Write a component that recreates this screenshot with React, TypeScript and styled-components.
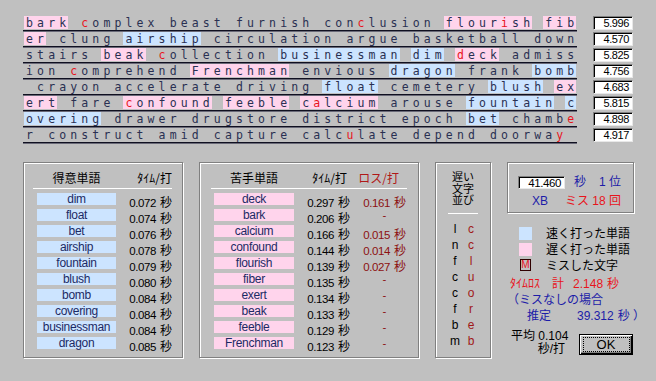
import React from 'react'
import styled, { createGlobalStyle } from 'styled-components'

const PINK = '#ffd4ec'
const BLUE = '#cce4ff'
const GRAY = '#c0c0c0'
const NAVY = '#1c1ca8'
const RED = '#e8141c'
const DARK_RED = '#8c1010'

const CJK = `"Noto Sans CJK JP", sans-serif`
const UI = `"Liberation Sans", "Noto Sans CJK JP", sans-serif`

const GlobalStyle = createGlobalStyle`
  body {
    margin: 0;
    background: ${GRAY};
  }
`

type Kind = 'fast' | 'slow' | undefined

interface Cell {
  ch: string
  kind: Kind
  miss: boolean
}

// [b:..] fast word, [p:..] slow word, ^ marks the next letter as a miss
const LINES = [
  '[p:bark] ^complex beast furnish con^clusion [p:flour^ish] [p:fib]',
  '[p:er] clung [b:airship] circulation argue basketball down',
  'stairs [p:beak] ^collection [b:businessman] [b:dim] [p:^deck] admiss',
  'ion ^comprehend [p:Frenchman] envious [b:dragon] frank [b:bomb]',
  ' crayon accelerate driving [b:float] cemetery [b:blush] [p:ex]',
  '[p:ert] fare [p:^confound] [p:feeble] [p:c^alcium] arouse [b:fountain] [b:c]',
  '[b:overing] drawer drugstore district epoch [b:bet] chamb^e',
  'r construct amid capture calc^ulate depend doorwa^y',
]

const LINE_TIMES = ['5.996', '4.570', '5.825', '4.756', '4.683', '5.815', '4.898', '4.917']

const GOOD = [
  ['dim', '0.072'],
  ['float', '0.074'],
  ['bet', '0.076'],
  ['airship', '0.078'],
  ['fountain', '0.079'],
  ['blush', '0.080'],
  ['bomb', '0.084'],
  ['covering', '0.084'],
  ['businessman', '0.084'],
  ['dragon', '0.085'],
]

const BAD = [
  ['deck', '0.297', '0.161'],
  ['bark', '0.206', ''],
  ['calcium', '0.166', '0.015'],
  ['confound', '0.144', '0.014'],
  ['flourish', '0.139', '0.027'],
  ['fiber', '0.135', ''],
  ['exert', '0.134', ''],
  ['beak', '0.133', ''],
  ['feeble', '0.129', ''],
  ['Frenchman', '0.123', ''],
]

const SLOW_CHARS = [
  ['l', 'c'],
  ['n', 'c'],
  ['f', 'l'],
  ['c', 'u'],
  ['c', 'o'],
  ['f', 'r'],
  ['b', 'e'],
  ['m', 'b'],
]

const parseLine = (src: string): Cell[] => {
  const cells: Cell[] = []
  let kind: Kind
  let miss = false
  for (let i = 0; i < src.length; i++) {
    const c = src[i]
    if (c === '[') {
      kind = src[i + 1] === 'b' ? 'fast' : 'slow'
      i += 2
      continue
    }
    if (c === ']') {
      kind = undefined
      continue
    }
    if (c === '^') {
      miss = true
      continue
    }
    cells.push({ ch: c, kind, miss })
    miss = false
  }
  while (cells.length < 50) cells.push({ ch: ' ', kind: undefined, miss: false })
  return cells
}

const Window = styled.div`
  width: 656px;
  height: 381px;
  box-sizing: border-box;
  padding: 15px 0 0 23px;
  background: ${GRAY};
  overflow: hidden;
`

const TopRow = styled.div`
  display: flex;
  align-items: flex-start;
`

const TypedText = styled.div`
  width: 554px;
`

const Line = styled.div`
  display: flex;
  height: 16px;
  box-sizing: border-box;
  padding: 1px 0 0 1px;
  border-bottom: 1px solid #101020;
  box-shadow: 0 1px 0 #6a6a78;
`

const Ch = styled.span<{ $kind: Kind; $miss: boolean }>`
  flex: none;
  width: 11.06px;
  height: 13px;
  line-height: 15px;
  text-align: center;
  white-space: pre;
  font: 11.5px "DejaVu Sans Mono", monospace;
  color: ${p => (p.$miss ? RED : '#2a3052')};
  background: ${p => (p.$kind === 'fast' ? BLUE : p.$kind === 'slow' ? PINK : 'transparent')};
`

const TimeColumn = styled.div`
  margin-left: 16px;
  padding-top: 1px;
  display: flex;
  flex-direction: column;
  gap: 2px;
`

const SunkenValue = styled.div<{ $w: number }>`
  width: ${p => p.$w}px;
  height: 14px;
  box-sizing: border-box;
  padding-right: 3px;
  background: #fff;
  border: 1px solid;
  border-color: #808080 #e8e8e8 #e8e8e8 #808080;
  box-shadow: inset 1px 1px 0 #000;
  text-align: right;
  font: 11px/12px "Liberation Sans", sans-serif;
  letter-spacing: -0.4px;
  color: #000;
`

const BottomRow = styled.div`
  margin-top: 19px;
  display: flex;
  align-items: flex-start;
  gap: 16px;
`

const Panel = styled.div<{ $w: number; $h: number }>`
  width: ${p => p.$w}px;
  height: ${p => p.$h}px;
  box-sizing: border-box;
  border: 1px solid #808080;
  box-shadow: inset 1px 1px 0 #fff, 1px 1px 0 #fff;
  padding: 7px 0 0 ${p => (p.$w > 100 ? 9 : 0)}px;
`

const WidePanel = styled(Panel)<{ $pad: number }>`
  padding-left: ${p => p.$pad}px;
`

const Table = styled.div<{ $w: number }>`
  width: ${p => p.$w}px;
`

const TableRow = styled.div<{ $cols: string; $pl?: number }>`
  display: grid;
  grid-template-columns: ${p => p.$cols};
  align-items: center;
  padding-left: ${p => p.$pl ?? 4}px;
`

const HeadCell = styled.div<{ $align?: string; $red?: boolean; $pr?: number }>`
  height: 16px;
  font: 12px/16px ${CJK};
  color: ${p => (p.$red ? '#b01818' : '#000')};
  text-align: ${p => p.$align || 'center'};
  padding-right: ${p => p.$pr || 0}px;
`

const Rule = styled.div<{ $w?: number; $mt?: number; $mb?: number }>`
  height: 1px;
  width: ${p => (p.$w ? `${p.$w}px` : 'auto')};
  background: #fff;
  margin: ${p => p.$mt ?? 2}px auto ${p => p.$mb ?? 4}px;
`

const Rows = styled.div`
  display: flex;
  flex-direction: column;
  gap: 4px;
`

const WordCell = styled.div<{ $kind: Kind }>`
  height: 12px;
  text-align: center;
  background: ${p => (p.$kind === 'fast' ? BLUE : PINK)};
  font: 12px/12px "Liberation Sans", sans-serif;
  letter-spacing: -0.3px;
  color: #1c2a64;
`

const TimeCell = styled.div<{ $red?: boolean; $align?: string; $pr?: number }>`
  height: 12px;
  font: 11.5px/12px ${UI};
  letter-spacing: -0.4px;
  text-align: ${p => p.$align || 'right'};
  padding-right: ${p => p.$pr || 0}px;
  color: ${p => (p.$red ? DARK_RED : '#000')};
  white-space: nowrap;
`

const Sec = styled.span`
  font: 12px ${CJK};
  letter-spacing: 0;
  margin-left: 4px;
`

const SlowHead = styled.div`
  margin-top: 1px;
  font: 11px/11.5px ${CJK};
  text-align: center;
  color: #000;
`

const SlowGrid = styled.div`
  margin: 7px auto 0;
  width: 32px;
  display: grid;
  grid-template-columns: 16px 16px;
  grid-auto-rows: 16px;
  align-items: center;
  text-align: center;
`

const SlowChar = styled.span<{ $miss?: boolean }>`
  font: 12px/16px "Liberation Sans", sans-serif;
  color: ${p => (p.$miss ? '#a01818' : '#000')};
`

const SideColumn = styled.div`
  width: 128px;
  display: flex;
  flex-direction: column;
`

const ScoreRow = styled.div<{ $mt?: number }>`
  display: flex;
  align-items: center;
  height: 14px;
  margin-top: ${p => p.$mt || 0}px;
  font: 12px/14px ${UI};
`

const BlueText = styled.span<{ $ml?: number }>`
  color: ${NAVY};
  margin-left: ${p => p.$ml || 0}px;
`

const RedText = styled.span<{ $ml?: number }>`
  color: ${RED};
  margin-left: ${p => p.$ml || 0}px;
`

const RightGroup = styled.span`
  margin-left: auto;
  margin-right: 12px;
  white-space: pre;
`

const ScoreInput = styled(SunkenValue)`
  height: 13px;
  font-size: 11.5px;
`

const Legend = styled.div`
  margin-top: 12px;
  display: flex;
  flex-direction: column;
`

const LegendRow = styled.div`
  display: flex;
  align-items: center;
  height: 16px;
  padding-left: 12px;
  gap: 14px;
  font: 12px/16px ${CJK};
  color: #000;
`

const Swatch = styled.span<{ $color: string }>`
  width: 13px;
  height: 13px;
  background: ${p => p.$color};
`

const MissMark = styled.span`
  width: 11px;
  height: 12px;
  box-sizing: border-box;
  border: 1px solid #300000;
  font: 10px/10px "Liberation Sans", sans-serif;
  text-align: center;
  color: ${RED};
  margin: 0 1px;
`

const InfoRow = styled.div<{ $mt?: number; $pl?: number }>`
  display: flex;
  align-items: center;
  height: 16px;
  margin-top: ${p => p.$mt || 0}px;
  padding-left: ${p => p.$pl || 0}px;
  font: 12px/16px ${UI};
  white-space: pre;
`

const Footer = styled.div`
  margin-top: 6px;
  display: flex;
  justify-content: space-between;
  align-items: flex-start;
`

const Average = styled.div`
  padding-left: 4px;
  width: 54px;
  text-align: right;
  font: 12px/13px ${UI};
  color: #000;
  white-space: nowrap;
`

const OkButton = styled.button`
  margin: 4px 2px 0 0;
  width: 54px;
  height: 21px;
  box-sizing: border-box;
  padding: 0;
  display: flex;
  align-items: center;
  justify-content: center;
  background: ${GRAY};
  border: 1px solid #000;
  box-shadow: inset 1px 1px 0 #fff, inset -1px -1px 0 #000, inset -2px -2px 0 #808080;
  font: 13px "Liberation Sans", sans-serif;
  color: #000;
`

const FocusRing = styled.span`
  width: 45px;
  height: 13px;
  line-height: 13px;
  border: 1px dotted #000;
`

export default function App() {
  return (
    <Window>
      <GlobalStyle />
      <TopRow>
        <TypedText>
          {LINES.map((src, i) => (
            <Line key={i}>
              {parseLine(src).map((c, j) => (
                <Ch key={j} $kind={c.kind} $miss={c.miss}>
                  {c.ch}
                </Ch>
              ))}
            </Line>
          ))}
        </TypedText>
        <TimeColumn>
          {LINE_TIMES.map(t => (
            <SunkenValue key={t} $w={40}>
              {t}
            </SunkenValue>
          ))}
        </TimeColumn>
      </TopRow>

      <BottomRow>
        <Panel $w={160} $h={196}>
          <Table $w={139}>
            <TableRow $cols="79px 1fr">
              <HeadCell>得意単語</HeadCell>
              <HeadCell $align="right">ﾀｲﾑ/打</HeadCell>
            </TableRow>
            <Rule />
            <Rows>
              {GOOD.map(([w, t]) => (
                <TableRow key={w} $cols="79px 1fr">
                  <WordCell $kind="fast">{w}</WordCell>
                  <TimeCell>
                    {t}
                    <Sec>秒</Sec>
                  </TimeCell>
                </TableRow>
              ))}
            </Rows>
          </Table>
        </Panel>

        <WidePanel $w={220} $h={196} $pad={11}>
          <Table $w={196}>
            <TableRow $cols="80px 56px 56px" $pl={3}>
              <HeadCell>苦手単語</HeadCell>
              <HeadCell $align="right" $pr={3}>ﾀｲﾑ/打</HeadCell>
              <HeadCell $align="right" $red $pr={7}>ロス/打</HeadCell>
            </TableRow>
            <Rule />
            <Rows>
              {BAD.map(([w, t, loss]) => (
                <TableRow key={w} $cols="80px 56px 56px" $pl={3}>
                  <WordCell $kind="slow">{w}</WordCell>
                  <TimeCell>
                    {t}
                    <Sec>秒</Sec>
                  </TimeCell>
                  {loss ? (
                    <TimeCell $red>
                      {loss}
                      <Sec>秒</Sec>
                    </TimeCell>
                  ) : (
                    <TimeCell $red $pr={20}>
                      -
                    </TimeCell>
                  )}
                </TableRow>
              ))}
            </Rows>
          </Table>
        </WidePanel>

        <Panel $w={56} $h={196}>
          <SlowHead>
            遅い
            <br />
            文字
            <br />
            並び
          </SlowHead>
          <Rule $w={30} $mt={7} $mb={0} />
          <SlowGrid>
            {SLOW_CHARS.map(([a, b], i) => (
              <React.Fragment key={i}>
                <SlowChar>{a}</SlowChar>
                <SlowChar $miss>{b}</SlowChar>
              </React.Fragment>
            ))}
          </SlowGrid>
        </Panel>

        <SideColumn>
          <WidePanel $w={127} $h={51} $pad={10} style={{ paddingTop: 12 }}>
            <ScoreRow>
              <ScoreInput $w={47}>41.460</ScoreInput>
              <BlueText $ml={9}>秒</BlueText>
              <RightGroup>
                <BlueText>1 位</BlueText>
              </RightGroup>
            </ScoreRow>
            <ScoreRow $mt={5}>
              <BlueText $ml={14}>XB</BlueText>
              <RightGroup>
                <RedText>ミス 18 回</RedText>
              </RightGroup>
            </ScoreRow>
          </WidePanel>

          <Legend>
            <LegendRow>
              <Swatch $color={BLUE} />
              速く打った単語
            </LegendRow>
            <LegendRow>
              <Swatch $color={PINK} />
              遅く打った単語
            </LegendRow>
            <LegendRow>
              <MissMark>M</MissMark>
              ミスした文字
            </LegendRow>
          </Legend>

          <InfoRow $mt={3} $pl={3}>
            <RedText>ﾀｲﾑﾛｽ</RedText>
            <RedText $ml={12}>計</RedText>
            <RedText $ml={9}>2.148</RedText>
            <RedText $ml={4}>秒</RedText>
          </InfoRow>
          <InfoRow>
            <BlueText>（ミスなしの場合</BlueText>
          </InfoRow>
          <InfoRow $pl={20}>
            <BlueText>推定</BlueText>
            <BlueText $ml={26}>39.312</BlueText>
            <BlueText $ml={4}>秒 ）</BlueText>
          </InfoRow>

          <Footer>
            <Average>
              平均 0.104
              <br />
              秒/打
            </Average>
            <OkButton>
              <FocusRing>OK</FocusRing>
            </OkButton>
          </Footer>
        </SideColumn>
      </BottomRow>
    </Window>
  )
}
